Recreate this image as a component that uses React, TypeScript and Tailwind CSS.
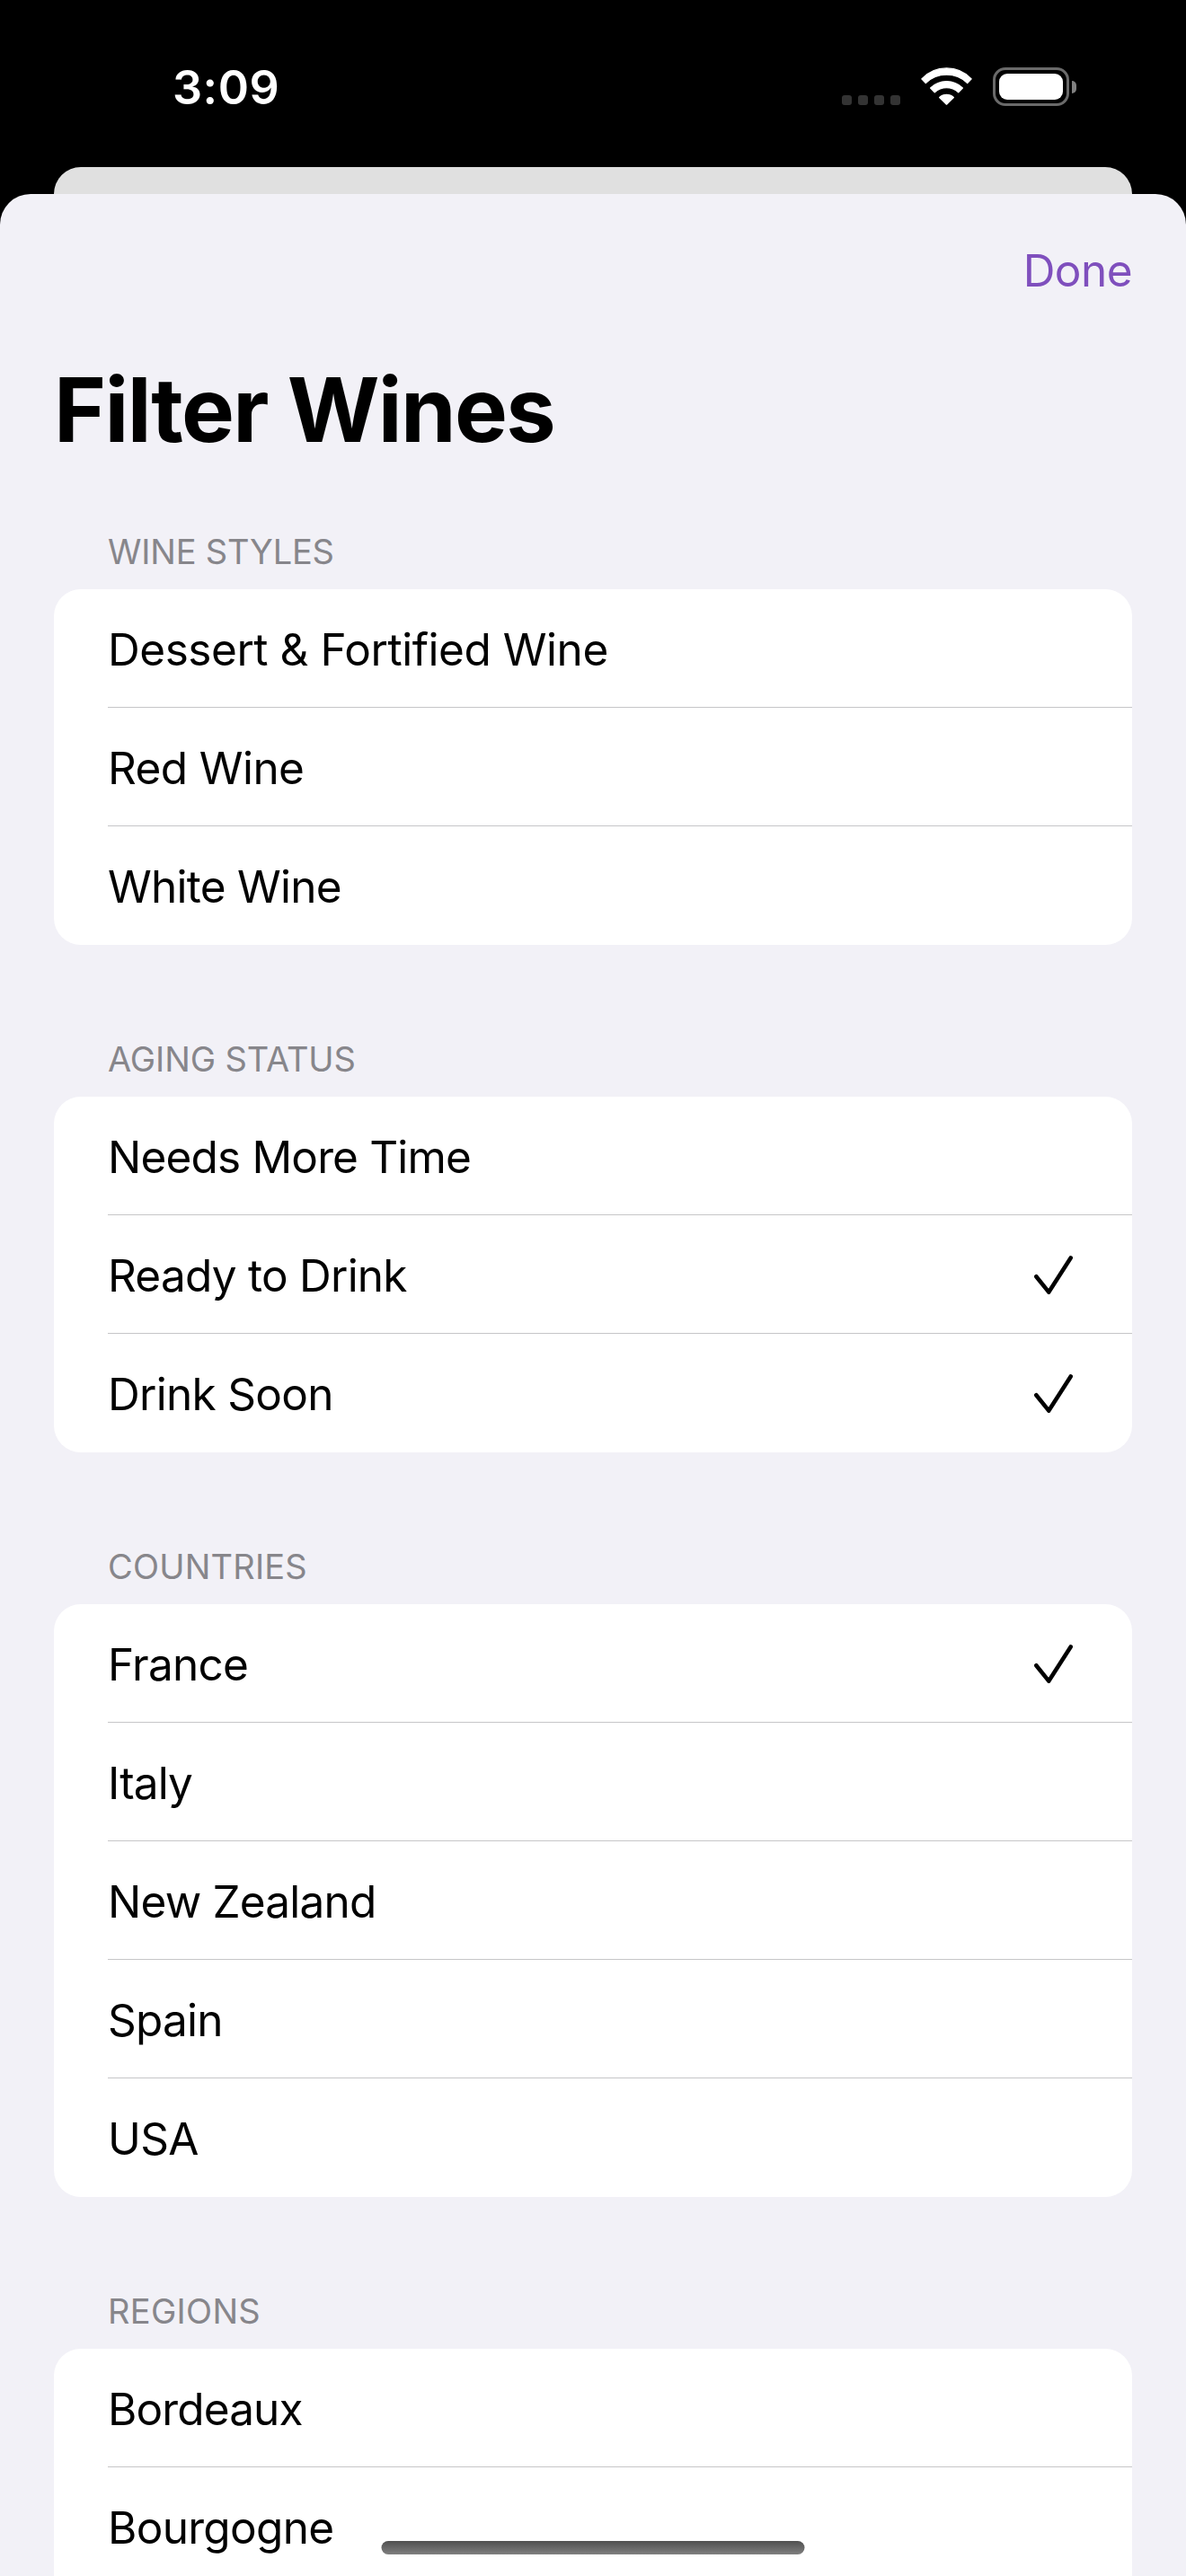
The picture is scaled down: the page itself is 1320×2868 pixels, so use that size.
import React from "react";

type Item = { label: string; checked?: boolean; tracking?: string };

const sections: { title: string; tracking: string; items: Item[] }[] = [
  {
    title: "WINE STYLES",
    tracking: "tracking-[-0.2px]",
    items: [
      { label: "Dessert & Fortified Wine", tracking: "tracking-[-0.46px]" },
      { label: "Red Wine", tracking: "tracking-[-0.6px]" },
      { label: "White Wine" },
    ],
  },
  {
    title: "AGING STATUS",
    tracking: "tracking-[-0.1px]",
    items: [
      { label: "Needs More Time", tracking: "tracking-[-0.83px]" },
      { label: "Ready to Drink", checked: true },
      { label: "Drink Soon", checked: true, tracking: "tracking-[-0.7px]" },
    ],
  },
  {
    title: "COUNTRIES",
    tracking: "tracking-[0.2px]",
    items: [
      { label: "France", checked: true },
      { label: "Italy", tracking: "tracking-[-0.87px]" },
      { label: "New Zealand", tracking: "tracking-[-0.8px]" },
      { label: "Spain" },
      { label: "USA", tracking: "tracking-[-0.65px]" },
    ],
  },
  {
    title: "REGIONS",
    tracking: "tracking-[0.3px]",
    items: [
      { label: "Bordeaux", tracking: "tracking-[-0.88px]" },
      { label: "Bourgogne", tracking: "tracking-[-0.7px]" },
    ],
  },
];

function Wifi() {
  return (
    <svg
      className="h-[42px] w-[57px] overflow-visible"
      viewBox="0 0 57 42"
      fill="#fff"
      stroke="#fff"
      strokeWidth="1.2"
      strokeLinejoin="round"
    >
      <path d="M.8 12.900A38 38 0 0 1 56.200 12.900L51.700 17.500A33.600 33.600 0 0 0 5.300 17.500Z" />
      <path d="M10.600 23A25.400 25.400 0 0 1 46.400 23L41.700 27.900A19.500 19.500 0 0 0 15.300 27.900Z" />
      <path d="M20.600 33.500A11.500 11.500 0 0 1 36.400 33.500L28.500 41.200Z" />
    </svg>
  );
}

function Battery() {
  return (
    <div className="flex items-center gap-[3px]">
      <div className="flex h-[43px] w-[85px] rounded-[14px] border-[3px] border-[#6a6a6a] p-1">
        <div className="flex-1 rounded-[9px] bg-white" />
      </div>
      <div className="h-[14px] w-[5px] rounded-r-full bg-[#808080]" />
    </div>
  );
}

function Check() {
  return (
    <svg className="mt-0.5 h-[43px] w-[43px]" viewBox="0 0 43 43" fill="none">
      <path
        d="M2.300 23.200 16.300 40.600 40.700 2.500"
        stroke="#000"
        strokeWidth="4.600"
        strokeLinecap="round"
        strokeLinejoin="round"
      />
    </svg>
  );
}

function StatusBar() {
  return (
    <header className="flex h-[186px] shrink-0 justify-between pr-[122px] pl-[192px]">
      <div className="pt-[63px] text-[52px] leading-[70px] font-semibold tracking-[0.5px] text-white">3:09</div>
      <div className="flex items-start pt-[75px]">
        <div className="mt-[31px] mr-[23px] flex gap-[7px]">
          {[0, 1, 2, 3].map((i) => (
            <span key={i} className="size-[11px] rounded-[3px] bg-[#333]" />
          ))}
        </div>
        <div className="mr-[23px]">
          <Wifi />
        </div>
        <Battery />
      </div>
    </header>
  );
}

function Row({ item, last }: { item: Item; last: boolean }) {
  return (
    <li className="flex h-[132px] pl-15">
      <div
        className={`flex flex-1 items-center justify-between pr-[66px] ${last ? "pb-px" : "border-b border-[#c6c6c8]"}`}
      >
        <span className={`pt-[2px] text-[49.5px] leading-[60px] ${item.tracking ?? "tracking-[-0.76px]"}`}>
          {item.label}
        </span>
        {item.checked && <Check />}
      </div>
    </li>
  );
}

export default function App() {
  return (
    <div className="relative flex h-[2868px] w-[1320px] flex-col overflow-hidden bg-black font-['Inter',sans-serif] text-black">
      <StatusBar />
      <div className="mx-15 h-[30px] shrink-0 rounded-t-[30px] bg-[#e0e0e0]" />
      <main className="flex-1 rounded-t-[34px] bg-[#f2f1f7]">
        <div className="flex h-[168px] justify-end pt-[55px] pr-15">
          <button className="h-[60px] text-[49.5px] leading-[60px] tracking-[-0.55px] text-[#7f4fbd]">Done</button>
        </div>
        <h1 className="h-[103px] pl-15 text-[99px] leading-[144px] font-bold tracking-[-1.65px]">Filter Wines</h1>
        {sections.map((s) => (
          <section key={s.title} className="group">
            <h2
              className={`flex h-[169px] items-end pb-[19px] pl-30 text-[38px] leading-[46px] text-[#87868b] ${s.tracking}`}
            >
              {s.title}
            </h2>
            <ul className="mx-15 rounded-[30px] bg-white group-last:rounded-b-none">
              {s.items.map((item, i) => (
                <Row key={item.label} item={item} last={i === s.items.length - 1} />
              ))}
            </ul>
          </section>
        ))}
      </main>
      <div className="absolute bottom-6 left-1/2 h-[15px] w-[471px] -translate-x-1/2 rounded-full bg-linear-to-b from-[#505050] to-[#808080]" />
    </div>
  );
}
